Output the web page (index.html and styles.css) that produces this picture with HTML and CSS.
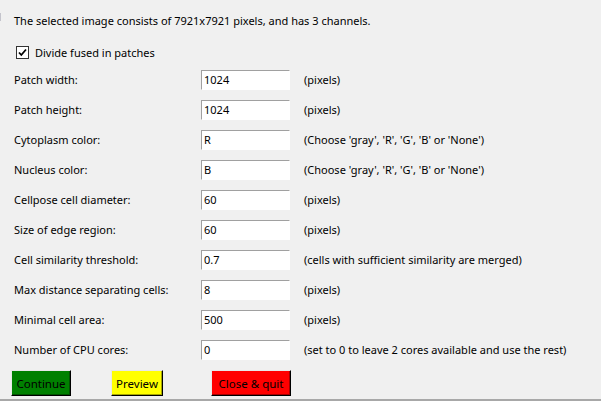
FILE: index.html
```html
<!DOCTYPE html>
<html>
<head>
<meta charset="utf-8">
<link rel="stylesheet" href="styles.css">
</head>
<body>
<div class="window">
  <p class="info">The selected image consists of 7921x7921 pixels, and has 3 channels.</p>
  <label class="check-row"><span class="checkbox"><svg width="11" height="11" viewBox="0 0 11 11"><path d="M2 5.5 L4.3 8 L9 2.5" fill="none" stroke="#000" stroke-width="1.8"/></svg></span>Divide fused in patches</label>
  <div class="form">
    <span class="label">Patch width:</span><span class="entry">1024</span><span class="unit">(pixels)</span>
    <span class="label">Patch height:</span><span class="entry">1024</span><span class="unit">(pixels)</span>
    <span class="label">Cytoplasm color:</span><span class="entry">R</span><span class="unit">(Choose 'gray', 'R', 'G', 'B' or 'None')</span>
    <span class="label">Nucleus color:</span><span class="entry">B</span><span class="unit">(Choose 'gray', 'R', 'G', 'B' or 'None')</span>
    <span class="label">Cellpose cell diameter:</span><span class="entry">60</span><span class="unit">(pixels)</span>
    <span class="label">Size of edge region:</span><span class="entry">60</span><span class="unit">(pixels)</span>
    <span class="label">Cell similarity threshold:</span><span class="entry">0.7</span><span class="unit">(cells with sufficient similarity are merged)</span>
    <span class="label">Max distance separating cells:</span><span class="entry">8</span><span class="unit">(pixels)</span>
    <span class="label">Minimal cell area:</span><span class="entry">500</span><span class="unit">(pixels)</span>
    <span class="label">Number of CPU cores:</span><span class="entry">0</span><span class="unit">(set to 0 to leave 2 cores available and use the rest)</span>
  </div>
  <div class="buttons">
    <button class="btn btn-green">Continue</button>
    <button class="btn btn-yellow">Preview</button>
    <button class="btn btn-red">Close &amp; quit</button>
  </div>
</div>
</body>
</html>
```
FILE: styles.css
```css
html, body {
  margin: 0;
  padding: 0;
  background: #f0f0f0;
}
body {
  font-family: "Noto Sans", "Open Sans", sans-serif;
  font-size: 11px;
  color: #000;
  width: 601px;
  height: 401px;
  overflow: hidden;
}
.window {
  position: relative;
  box-sizing: border-box;
  width: 601px;
  height: 401px;
  padding: 11px 0 0 14px;
  border-bottom: 2px solid #a8a8a8;
}
.window::before {
  content: "";
  position: absolute;
  left: 0;
  top: 13px;
  width: 1px;
  height: 8px;
  background: #c4c4cc;
}
.info {
  margin: 0;
  height: 20px;
  line-height: 20px;
}
.check-row {
  display: flex;
  align-items: center;
  height: 21px;
  margin-top: 11px;
  margin-left: 2px;
  gap: 6px;
}
.checkbox {
  box-sizing: border-box;
  width: 13px;
  height: 13px;
  border: 1px solid #333;
  background: #fff;
  display: flex;
  align-items: center;
  justify-content: center;
}
.form {
  display: grid;
  grid-template-columns: 187px 89px auto;
  grid-auto-rows: 20px;
  row-gap: 10px;
  align-items: center;
  margin-top: 7px;
}
.label, .unit {
  line-height: 20px;
  white-space: nowrap;
}
.unit {
  margin-left: 14px;
}
.entry {
  box-sizing: border-box;
  height: 20px;
  line-height: 18px;
  padding-left: 2px;
  background: #fff;
  border-top: 1px solid #a0a0a0;
  border-left: 1px solid #a0a0a0;
  border-right: 1px solid #fff;
  border-bottom: 1px solid #fff;
}
.buttons {
  display: grid;
  grid-template-columns: 100px 100px 100px;
  justify-items: start;
  margin-top: 10px;
  margin-left: -3px;
}
.btn {
  box-sizing: border-box;
  height: 26px;
  font-family: inherit;
  font-size: 11.5px;
  color: #000;
  padding: 0 4px;
  border-style: solid;
  border-width: 1px;
  border-color: #e8e8e8 #000 #000 #e8e8e8;
  box-shadow: inset -1px -1px 0 rgba(0,0,0,0.35);
}
.btn-green { background: #008000; width: 60px; }
.btn-yellow { background: #ffff00; width: 52px; }
.btn-red { background: #ff0000; width: 80px; }
```
